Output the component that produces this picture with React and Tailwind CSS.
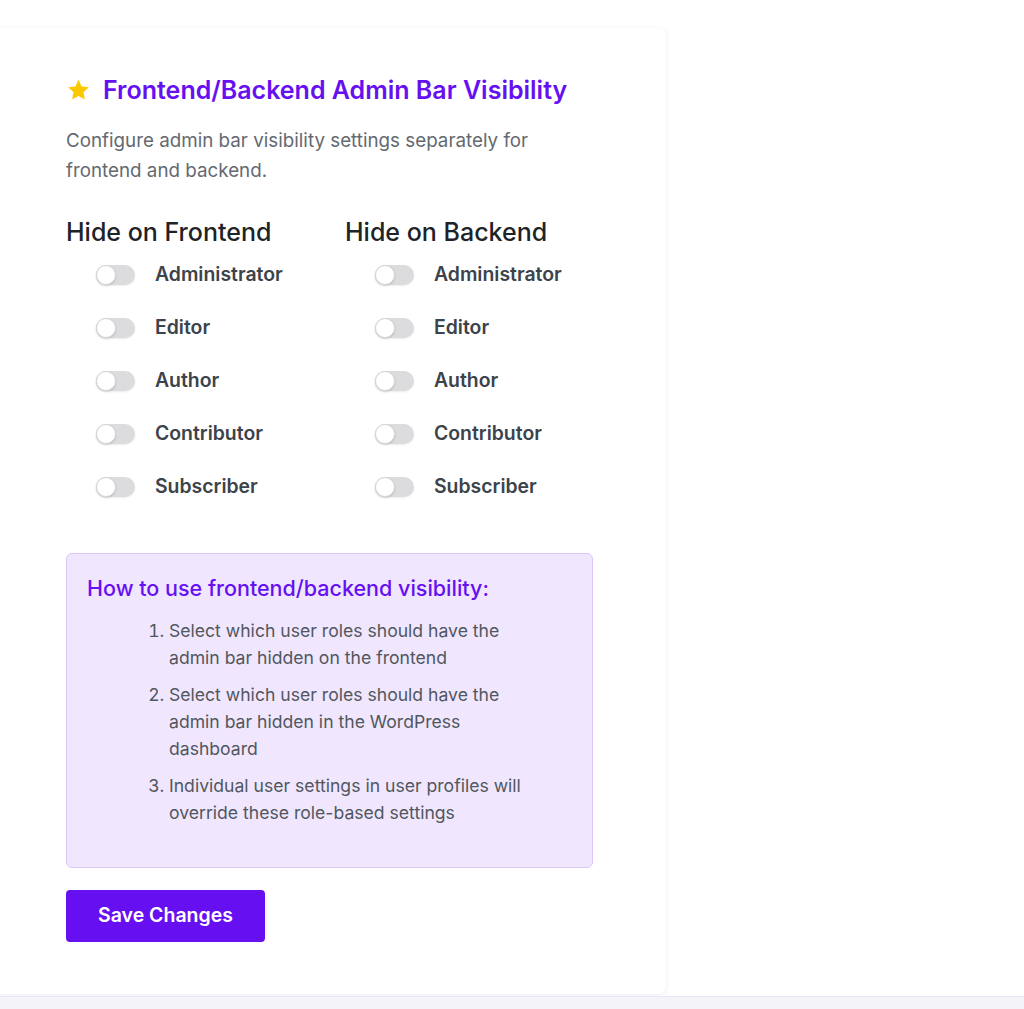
const roles = ['Administrator', 'Editor', 'Author', 'Contributor', 'Subscriber'];

const Toggle = () => (
  <span className="relative inline-block w-[39px] h-[20px] rounded-full bg-[#dcdcde] shadow-[0_1px_2px_rgba(0,0,0,0.08)]">
    <span className="absolute left-0 top-0 w-[20px] h-[20px] rounded-full bg-white border border-[#d6d6d8] shadow-[0_1px_2px_rgba(0,0,0,0.15)]" />
  </span>
);

const RoleColumn = ({ title }) => (
  <div className="w-[279px]">
    <h3 className="text-[25px] leading-[32px] font-medium text-[#1d2327]">{title}</h3>
    {roles.map((role) => (
      <div key={role} className="h-[53px] flex items-center pl-[30px]">
        <Toggle />
        <span className="ml-[20px] text-[19.4px] font-semibold text-[#3c434a]">{role}</span>
      </div>
    ))}
  </div>
);

export default function App() {
  return (
    <div className="min-h-screen bg-white font-['Inter',sans-serif] flex flex-col">
      <div className="pt-[28px]">
        <div className="w-[666px] bg-white rounded-r-lg shadow-[0_1px_4px_rgba(90,70,180,0.12)] pl-[66px] pt-[46px] pb-[52px]">
          {/* Header */}
          <div className="flex items-center h-[32px]">
            <svg width="25" height="24" viewBox="0 0 24 24" className="shrink-0">
              <path
                d="M12 1.8l3.1 6.6 7.2.9-5.3 5 1.4 7.1L12 17.9l-6.4 3.5 1.4-7.1-5.3-5 7.2-.9z"
                fill="#fcc900"
              />
            </svg>
            <h2 className="ml-[12px] text-[25px] leading-[32px] font-semibold text-[#6610f2]">
              Frontend/Backend Admin Bar Visibility
            </h2>
          </div>
          <p className="mt-[20px] w-[500px] text-[18.8px] leading-[30px] text-[#646970]">
            Configure admin bar visibility settings separately for frontend and backend.
          </p>

          {/* Role toggles */}
          <div className="mt-[30px] flex">
            <RoleColumn title="Hide on Frontend" />
            <RoleColumn title="Hide on Backend" />
          </div>

          {/* Info box */}
          <div className="mt-[40px] w-[527px] rounded-md bg-[#f0e6fe] border border-[#dcc7fb] pl-[20px] pt-[20px] pb-[41px]">
            <h4 className="text-[21.5px] leading-[28px] font-medium text-[#6610f2]">
              How to use frontend/backend visibility:
            </h4>
            <ol className="mt-[15px] ml-[62px] w-[395px] list-decimal pl-[20px] text-[17.6px] leading-[27px] text-[#50575e] space-y-[10px]">
              <li>Select which user roles should have the admin bar hidden on the frontend</li>
              <li>Select which user roles should have the admin bar hidden in the WordPress dashboard</li>
              <li>Individual user settings in user profiles will override these role-based settings</li>
            </ol>
          </div>

          <button className="mt-[22px] w-[199px] h-[52px] rounded bg-[#6610f2] text-white text-[19.5px] font-semibold">
            Save Changes
          </button>
        </div>
      </div>
      <div className="mt-[2px] flex-1 bg-[#f4f3f8] border-t border-[#ebe7f7]" />
    </div>
  );
}
